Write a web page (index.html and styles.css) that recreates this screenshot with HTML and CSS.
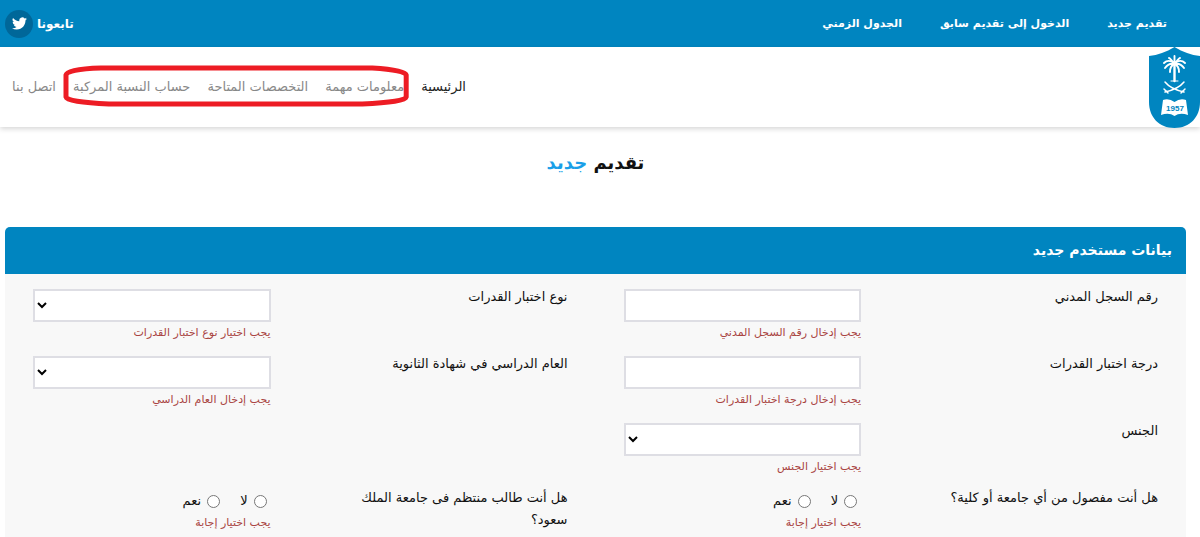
FILE: index.html
```html
<!DOCTYPE html>
<html lang="ar" dir="rtl">
<head>
<meta charset="utf-8">
<title>تقديم جديد</title>
<link rel="stylesheet" href="styles.css">
</head>
<body>
<header>
  <div class="topbar">
    <nav class="topbar-links">
      <a href="#">تقديم جديد</a>
      <a href="#">الدخول إلى تقديم سابق</a>
      <a href="#">الجدول الزمني</a>
    </nav>
    <a class="follow" href="#">
      <span>تابعونا</span>
      <span class="bird"><svg viewBox="0 0 24 24" aria-hidden="true"><path d="M23.95 4.57a10 10 0 0 1-2.82.77 4.96 4.96 0 0 0 2.16-2.72c-.95.55-2 .95-3.13 1.18a4.92 4.92 0 0 0-8.38 4.48C7.69 8.1 4.07 6.13 1.64 3.16a4.92 4.92 0 0 0 1.52 6.57 4.9 4.9 0 0 1-2.23-.61v.06a4.92 4.92 0 0 0 3.95 4.83 5 5 0 0 1-2.21.08 4.94 4.94 0 0 0 4.6 3.42A9.87 9.87 0 0 1 0 19.54a14 14 0 0 0 7.55 2.21c9.05 0 14-7.5 14-13.98 0-.21 0-.42-.02-.63a9.94 9.94 0 0 0 2.42-2.57z"/></svg></span>
    </a>
  </div>
  <div class="mainbar">
    <a class="logo" href="#" aria-label="1957">
      <svg viewBox="0 0 51 81">
        <path fill="#0085c0" d="M25.500 0C34 5 42 8 51 9V55C51 70 41 81 25.500 81S0 70 0 55V9C9 8 17 5 25.500 0Z"/>
        <g fill="none" stroke="#fff" stroke-linecap="round">
          <path stroke-width="2.400" d="M25.500 17V34"/>
          <path stroke-width="1.900" d="M25.500 17C22 13 18 13 15 16M25.500 17C29 13 33 13 36 16M25.500 17C21 16 18 18 16 21M25.500 17C30 16 33 18 35 21M25.500 17C23 18 21 21 21 25M25.500 17C28 18 30 21 30 25M25.500 17C23 14 21 11 20 11M25.500 17C28 14 30 11 31 11M25.500 17V9"/>
          <path stroke-width="1.500" d="M16 35C20 40 26 43 35 45M35 35C31 40 25 43 16 45M15 42L19 46M36 42L32 46"/>
          <path stroke-width="1" d="M22 34H29"/>
        </g>
        <path fill="#fff" d="M14 53Q20 51 25.500 55Q31 51 37 53L39 68Q31 65 25.500 69Q20 65 12 68Z"/>
        <text x="26" y="64" text-anchor="middle" class="logo-year">1957</text>
      </svg>
    </a>
    <nav class="menu">
      <a class="active" href="#">الرئيسية</a>
      <div class="marked">
        <a href="#">معلومات مهمة</a>
        <a href="#">التخصصات المتاحة</a>
        <a href="#">حساب النسبة المركبة</a>
        <svg class="marker" viewBox="0 0 347 42" preserveAspectRatio="none" aria-hidden="true"><path d="M3 10Q4 4 38 3H310Q343 5 344 10V32Q343 37 300 39H46Q4 37 3 32Z"/></svg>
      </div>
      <a href="#">اتصل بنا</a>
    </nav>
  </div>
</header>
<main>
  <h1>تقديم <span>جديد</span></h1>
  <form class="card">
    <h2>بيانات مستخدم جديد</h2>
    <div class="fields">
      <div class="field">
        <label for="civil">رقم السجل المدني</label>
        <div><input class="box" id="civil" type="text"><p class="error">يجب إدخال رقم السجل المدني</p></div>
      </div>
      <div class="field">
        <label for="kind">نوع اختبار القدرات</label>
        <div><select class="box" id="kind"><option></option></select><p class="error">يجب اختيار نوع اختبار القدرات</p></div>
      </div>
      <div class="field">
        <label for="score">درجة اختبار القدرات</label>
        <div><input class="box" id="score" type="text"><p class="error">يجب إدخال درجة اختبار القدرات</p></div>
      </div>
      <div class="field">
        <label for="year">العام الدراسي في شهادة الثانوية</label>
        <div><select class="box" id="year"><option></option></select><p class="error">يجب إدخال العام الدراسي</p></div>
      </div>
      <div class="field solo">
        <label for="gender">الجنس</label>
        <div><select class="box" id="gender"><option></option></select><p class="error">يجب اختيار الجنس</p></div>
      </div>
      <div class="field" role="radiogroup" aria-labelledby="q1">
        <span id="q1">هل أنت مفصول من أي جامعة أو كلية؟</span>
        <div>
          <div class="choices">
            <label><input type="radio" name="dismissed">لا</label>
            <label><input type="radio" name="dismissed">نعم</label>
          </div>
          <p class="error">يجب اختيار إجابة</p>
        </div>
      </div>
      <div class="field" role="radiogroup" aria-labelledby="q2">
        <span id="q2">هل أنت طالب منتظم فى جامعة الملك سعود؟</span>
        <div>
          <div class="choices">
            <label><input type="radio" name="enrolled">لا</label>
            <label><input type="radio" name="enrolled">نعم</label>
          </div>
          <p class="error">يجب اختيار إجابة</p>
        </div>
      </div>
    </div>
  </form>
</main>
</body>
</html>
```
FILE: styles.css
```css
* { box-sizing: border-box; }
body {
  margin: 0;
  background: #fff;
  color: #111;
  font: 13px/22px "DejaVu Sans", sans-serif;
  overflow: hidden;
}
a { color: inherit; text-decoration: none; white-space: nowrap; }
h1, h2, p { margin: 0; }

.topbar {
  display: flex;
  justify-content: space-between;
  align-items: center;
  height: 47px;
  padding: 0 33px 0 5px;
  background: #0085c0;
  color: #fff;
  font-weight: bold;
}
.topbar-links { display: flex; gap: 38px; font-size: 11px; }
.follow { display: flex; align-items: center; gap: 4px; font-size: 12px; }
.bird {
  display: grid;
  place-items: center;
  width: 28px;
  height: 28px;
  border-radius: 50%;
  background: #006799;
}
.bird svg { width: 15px; height: 15px; fill: #fff; }

.mainbar {
  display: flex;
  justify-content: space-between;
  align-items: center;
  height: 80px;
  padding-left: 12px;
  box-shadow: 0 2px 5px rgba(0, 0, 0, 0.16);
}
.logo svg { display: block; width: 51px; height: 81px; }
.logo-year { font: bold 8px "Liberation Sans", sans-serif; fill: #0085c0; direction: ltr; }
.menu { display: flex; gap: 17px; color: #888; font-size: 13px; }
.active { color: #222; }
.marked { position: relative; display: flex; gap: 17px; }
.marker {
  position: absolute;
  top: -11px;
  left: -10px;
  width: calc(100% + 15px);
  height: 42px;
}
.marker path { fill: none; stroke: #ed1c24; stroke-width: 5; }

main { padding: 21px 14px 0 5px; }
h1 { font-size: 18px; line-height: 30px; text-align: center; }
h1 span { color: #1a9fe8; }
.card { margin-top: 49px; border-radius: 5px 5px 0 0; overflow: hidden; background: #f8f8f8; }
h2 { padding: 8px 14px; background: #0085c0; color: #fff; font-size: 14px; line-height: 31px; }
.fields { display: grid; grid-template-columns: 1fr 1fr; padding: 15px 0; row-gap: 12px; }
.field { display: grid; grid-template-columns: 5fr 4fr; padding: 0 28px; }
.field > label, .field > span { margin-top: -3px; padding-left: 56px; }
.solo { grid-column: 1 / -1; width: 50%; }
.box {
  display: block;
  width: 100%;
  height: 33px;
  padding: 0 4px;
  border: 2px solid #dedee4;
  border-radius: 0;
  background: #fff;
  font: inherit;
}
.error { color: #a94442; font-size: 11px; white-space: nowrap; }
.choices { display: flex; gap: 20px; padding: 0 4px; }
.choices label { display: flex; align-items: center; gap: 6px; }
.choices input { width: 13px; height: 13px; margin: 0; }
```
